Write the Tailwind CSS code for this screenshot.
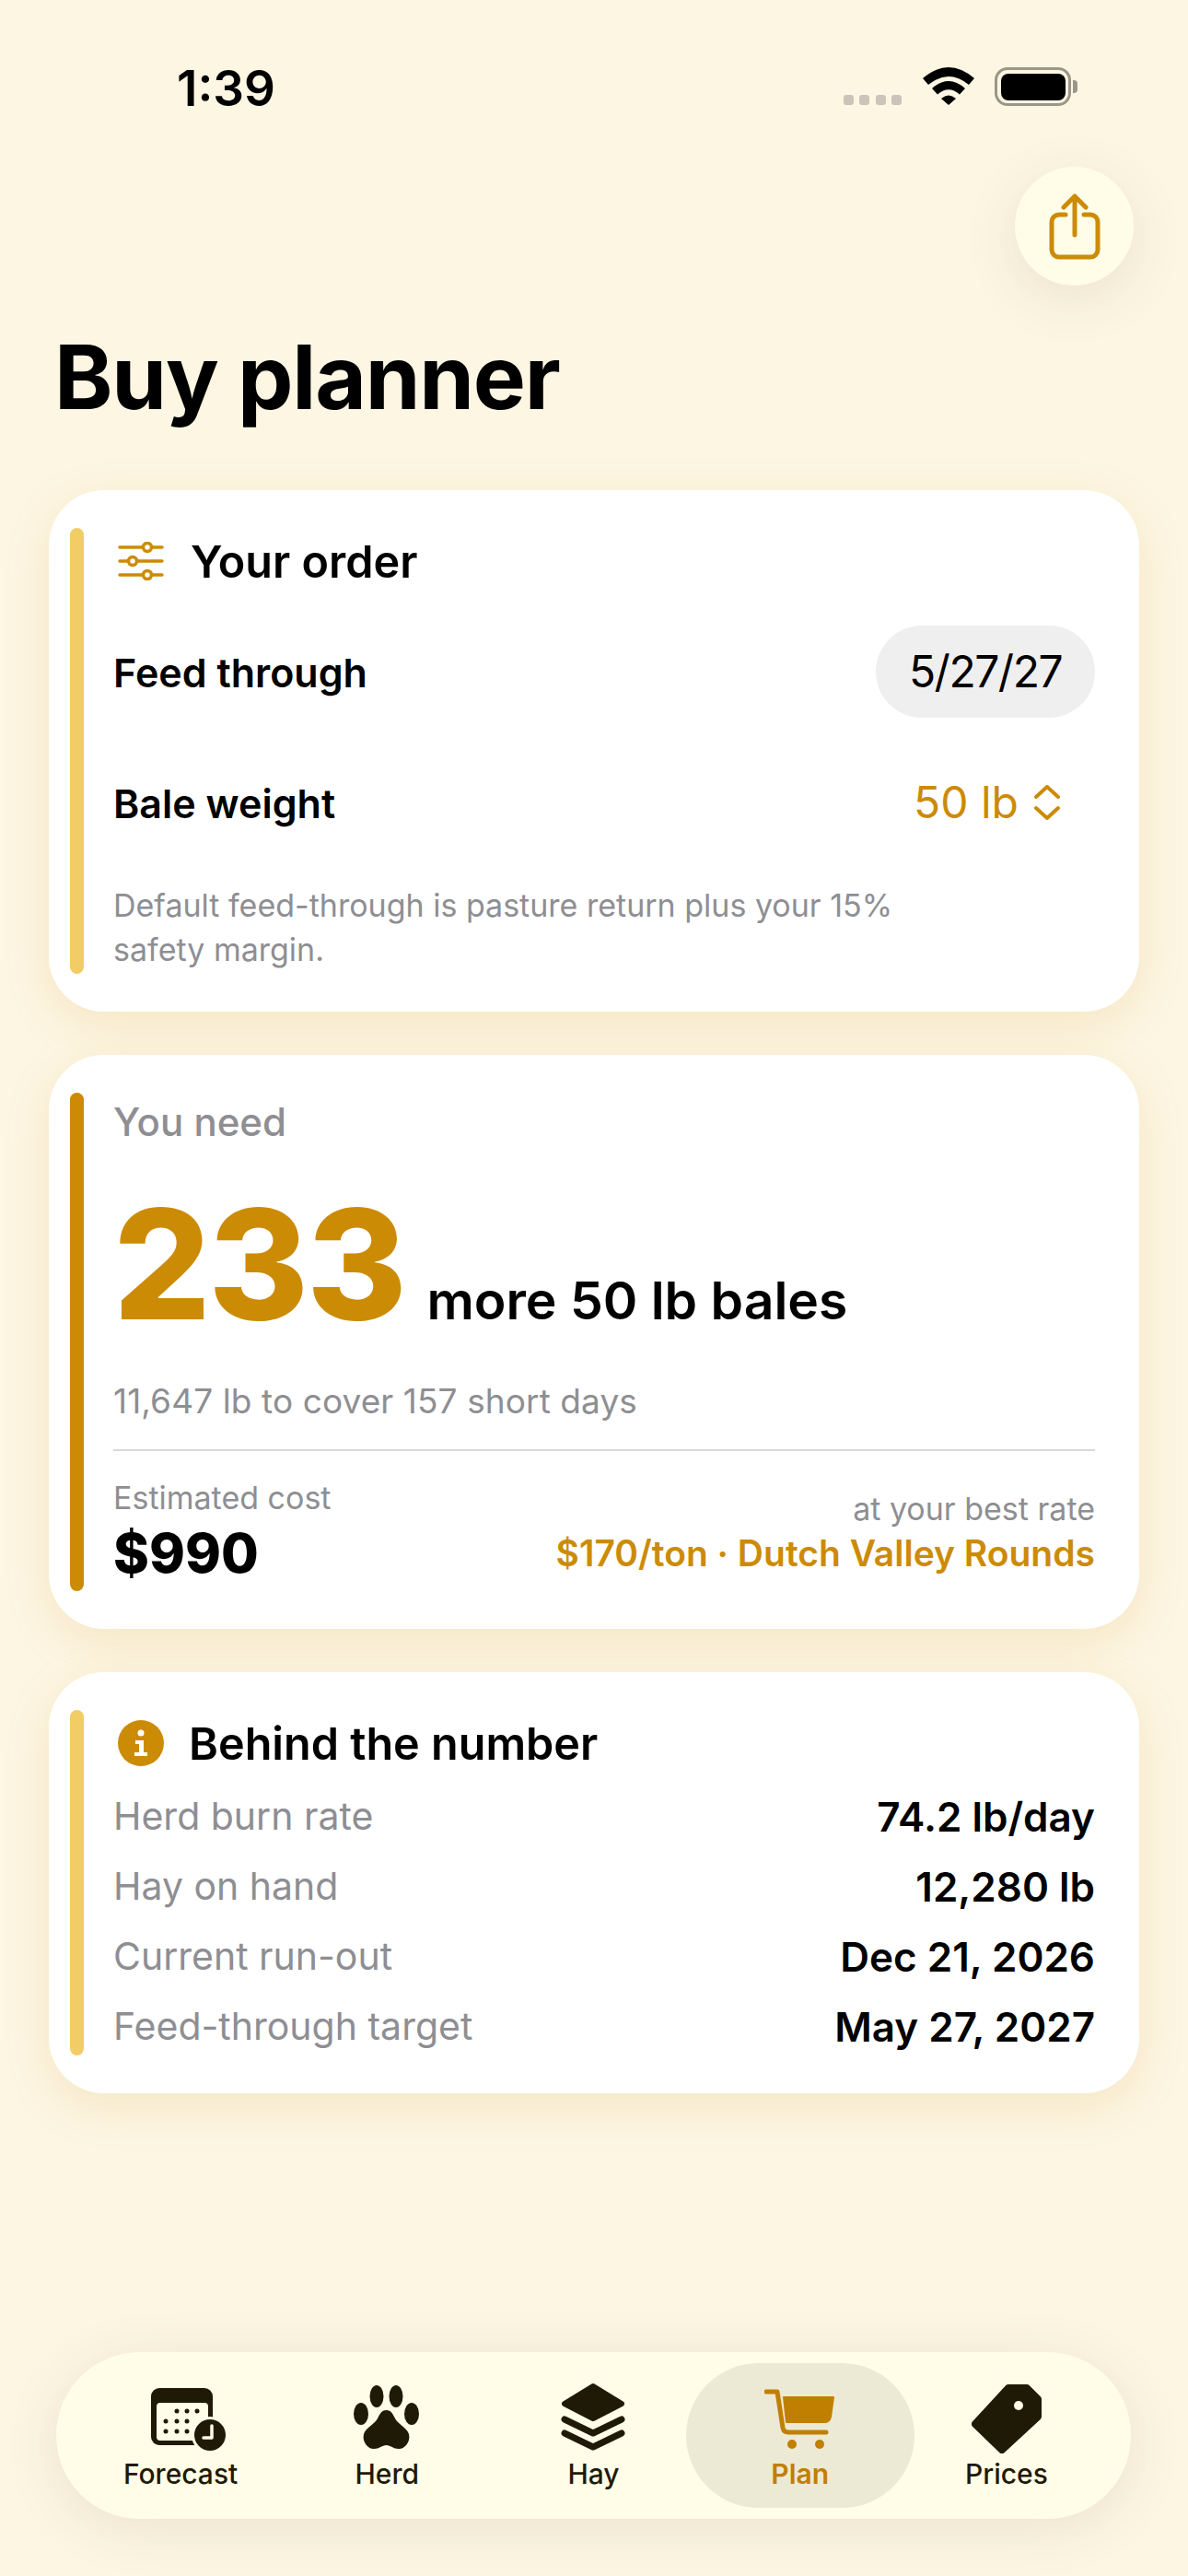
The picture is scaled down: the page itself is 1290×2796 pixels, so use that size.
<!DOCTYPE html>
<html lang="en">
<head>
  <meta charset="UTF-8" />
  <meta name="viewport" content="width=device-width, initial-scale=1.0"/>
  <title>Buy planner</title>
  <script src="https://cdn.jsdelivr.net/npm/@tailwindcss/browser@4"></script>
</head>
<body class="bg-[#fdf6e3]">
  <div class="w-[1290px] h-[2796px] flex flex-col bg-[#fdf6e3] text-black overflow-hidden [font-family:Inter,sans-serif]">

    <!-- status bar -->
    <div class="h-[181px] flex justify-between shrink-0">
      <div class="ml-[192px] mt-[70px] h-[52px] text-[53px] leading-[52px] font-semibold">1:39</div>
      <div class="mr-[120px] mt-[73px] h-[42px] flex items-start">
        <div class="flex gap-[6.5px] mt-[30px]">
          <div class="w-[11px] h-[11px] rounded-[3px] bg-[#cbc4b8]"></div>
          <div class="w-[11px] h-[11px] rounded-[3px] bg-[#cbc4b8]"></div>
          <div class="w-[11px] h-[11px] rounded-[3px] bg-[#cbc4b8]"></div>
          <div class="w-[11px] h-[11px] rounded-[3px] bg-[#cbc4b8]"></div>
        </div>
        <svg class="ml-[23px]" width="56" height="41" viewBox="0 0 56 41" fill="#000">
          <path d="M0 12 Q28 -12 56 12 L50 19 Q28 1 6 19Z"/>
          <path d="M10 23 Q28 7 46 23 L40 29.5 Q28 19 16 29.5Z"/>
          <path d="M20 34 Q28 27 36 34 L28 41Z"/>
        </svg>
        <div class="ml-[22px] w-[83px] h-[42px] rounded-[14px] border-[3.5px] border-[#9a9689] p-[3.5px]">
          <div class="w-full h-full rounded-[8px] bg-black"></div>
        </div>
        <div class="ml-[2px] mt-[14px] w-[5px] h-[14px] rounded-r-[4px] bg-[#9a9689]"></div>
      </div>
    </div>

    <!-- share button -->
    <div class="h-[129px] flex justify-end pr-[59px] shrink-0">
      <div class="w-[129px] h-[129px] rounded-full bg-[#fffde8] shadow-[0_14px_60px_rgba(80,60,20,0.10)] flex items-center justify-center">
        <svg width="60" height="74" viewBox="0 0 60 74" fill="none" stroke="#cc8b05" stroke-width="5" stroke-linecap="round" stroke-linejoin="round">
          <path d="M20 24 h-7 a8 8 0 0 0 -8 8 v30 a8 8 0 0 0 8 8 h34 a8 8 0 0 0 8 -8 v-30 a8 8 0 0 0 -8 -8 h-7"/>
          <path d="M30 46 V5 M18 16 L30 4 L42 16"/>
        </svg>
      </div>
    </div>

    <h1 class="mt-[51px] ml-[59px] text-[96px] leading-[96px] font-bold tracking-[-1.2px] shrink-0">Buy planner</h1>

    <!-- your order -->
    <div class="mt-[75px] mx-[53px] h-[566px] rounded-[60px] bg-white shadow-[0_14px_50px_rgba(205,150,40,0.16)] flex pl-[23px] py-[41px] pr-[48px] shrink-0">
      <div class="w-[15px] rounded-full bg-[#f2cd66] shrink-0"></div>
      <div class="ml-[32px] flex-1">
        <div class="h-[72px] flex items-center">
          <svg class="ml-[5px]" width="50" height="42" viewBox="0 0 50 42" fill="none" stroke="#cc8b05" stroke-width="3.5" stroke-linecap="round">
            <path d="M2 6 H27 M37 6 H48 M2 21 H11 M21 21 H48 M2 36 H27 M37 36 H48"/>
            <circle cx="32" cy="6" r="4.5"/>
            <circle cx="16" cy="21" r="4.5"/>
            <circle cx="32" cy="36" r="4.5"/>
          </svg>
          <div class="ml-[29px] pt-[2px] text-[48.5px] leading-[60px] font-semibold">Your order</div>
        </div>
        <div class="mt-[34px] h-[100px] flex items-center justify-between">
          <div class="pt-[2px] text-[43px] leading-[56px] font-semibold">Feed through</div>
          <div class="h-[100px] w-[238px] rounded-full bg-[#efefef] flex items-center justify-center text-[48px] leading-[60px] tracking-[-1.5px]">5/27/27</div>
        </div>
        <div class="mt-[42px] h-[100px] flex items-center justify-between">
          <div class="pt-[2px] text-[43px] leading-[56px] font-semibold">Bale weight</div>
          <div class="flex items-center text-[#cc8b05] pr-[38px]">
            <span class="text-[48px] leading-[60px]">50 lb</span>
            <svg class="ml-[17px]" width="28" height="38" viewBox="0 0 28 38" fill="none" stroke="#cc8b05" stroke-width="4" stroke-linecap="round" stroke-linejoin="round">
              <path d="M2 13 L14 2 L26 13 M2 25 L14 36 L26 25"/>
            </svg>
          </div>
        </div>
        <p class="mt-[38px] w-[900px] text-[34px] leading-[48px] text-[#8e8e93]">Default feed-through is pasture return plus your 15% safety margin.</p>
      </div>
    </div>

    <!-- you need -->
    <div class="mt-[47px] mx-[53px] h-[623px] rounded-[60px] bg-white shadow-[0_14px_50px_rgba(205,150,40,0.16)] flex pl-[23px] py-[41px] pr-[48px] shrink-0">
      <div class="w-[15px] rounded-full bg-[#cc8b05] shrink-0"></div>
      <div class="ml-[32px] flex-1">
        <div class="h-[63px] flex items-center text-[42px] leading-[52px] font-medium text-[#8e8e93]">You need</div>
        <div class="mt-[40px] h-[166px] flex items-baseline">
          <span class="text-[166px] leading-[166px] font-extrabold tracking-[-2.5px] text-[#cc8b05]">233</span>
          <span class="ml-[24px] text-[57px] leading-[60px] font-semibold">more 50 lb bales</span>
        </div>
        <div class="mt-[41px] h-[50px] flex items-center text-[37px] tracking-[0.1px] text-[#8e8e93]">11,647 lb to cover 157 short days</div>
        <div class="mt-[27px] h-[2px] bg-[#d9d9d9]"></div>
        <div class="mt-[27px] h-[126px] flex justify-between">
          <div>
            <div class="h-[46px] flex items-center text-[34px] text-[#8e8e93]">Estimated cost</div>
            <div class="mt-[8px] h-[60px] flex items-center text-[59px] font-extrabold">$990</div>
          </div>
          <div class="pt-[12px] text-right">
            <div class="h-[46px] flex items-center justify-end text-[34px] text-[#8e8e93]">at your best rate</div>
            <div class="mt-[1px] h-[50px] flex items-center justify-end text-[39px] font-semibold text-[#cc8b05]">$170/ton · Dutch Valley Rounds</div>
          </div>
        </div>
      </div>
    </div>

    <!-- behind the number -->
    <div class="mt-[47px] mx-[53px] h-[457px] rounded-[60px] bg-white shadow-[0_14px_50px_rgba(205,150,40,0.16)] flex pl-[23px] py-[41px] pr-[48px] shrink-0">
      <div class="w-[15px] rounded-full bg-[#f2cd66] shrink-0"></div>
      <div class="ml-[32px] flex-1">
        <div class="h-[72px] flex items-center">
          <svg class="ml-[5px]" width="50" height="50" viewBox="0 0 50 50">
            <circle cx="25" cy="25" r="25" fill="#cc8b05"/>
            <circle cx="25" cy="14" r="3.5" fill="#fff"/>
            <path d="M19 22 H28 V35 H32 V39 H18 V35 H23 V26 H19Z" fill="#fff"/>
          </svg>
          <div class="ml-[27px] pt-[2px] text-[48.5px] leading-[60px] font-semibold">Behind the number</div>
        </div>
        <div class="mt-[6px] flex flex-col">
          <div class="h-[76px] flex items-center justify-between"><span class="text-[41px] text-[#8e8e93]">Herd burn rate</span><span class="text-[44px] font-semibold">74.2 lb/day</span></div>
          <div class="h-[76px] flex items-center justify-between"><span class="text-[41px] text-[#8e8e93]">Hay on hand</span><span class="text-[44px] font-semibold">12,280 lb</span></div>
          <div class="h-[76px] flex items-center justify-between"><span class="text-[41px] text-[#8e8e93]">Current run-out</span><span class="text-[44px] font-semibold">Dec 21, 2026</span></div>
          <div class="h-[76px] flex items-center justify-between"><span class="text-[41px] text-[#8e8e93]">Feed-through target</span><span class="text-[44px] font-semibold">May 27, 2027</span></div>
        </div>
      </div>
    </div>

    <!-- tab bar -->
    <div class="mt-auto mb-[62px] ml-[61px] w-[1167px] h-[181px] rounded-full bg-[#fffde8] shadow-[0_10px_60px_rgba(80,60,20,0.10)] px-[23px] py-[12px] grid grid-cols-5 shrink-0 text-[#1f1a05] text-[30px] leading-[36px] font-medium">
      <div class="flex flex-col items-center">
        <div class="h-[102px]">
          <svg class="mt-[25px] ml-[17px]" width="84" height="72" viewBox="0 0 84 72">
            <rect x="1" y="2" width="67" height="62" rx="9" fill="#1f1a05"/>
            <rect x="7" y="18" width="56" height="41" rx="4" fill="#fffde8"/>
            <g fill="#1f1a05">
              <circle cx="29" cy="27" r="2.5"/><circle cx="40" cy="27" r="2.5"/><circle cx="51" cy="27" r="2.5"/>
              <circle cx="17" cy="38" r="2.5"/><circle cx="29" cy="38" r="2.5"/><circle cx="40" cy="38" r="2.5"/>
              <circle cx="17" cy="49" r="2.5"/><circle cx="29" cy="49" r="2.5"/><circle cx="40" cy="49" r="2.5"/>
            </g>
            <circle cx="65" cy="53" r="20" fill="#fffde8"/>
            <circle cx="65" cy="53" r="17" fill="#1f1a05"/>
            <path d="M67 43 V56 H58" fill="none" stroke="#fffde8" stroke-width="3.5" stroke-linecap="round" stroke-linejoin="round"/>
          </svg>
        </div>
        <span>Forecast</span>
      </div>
      <div class="flex flex-col items-center">
        <div class="h-[102px]">
          <svg class="mt-[24px]" width="72" height="70" viewBox="0 0 72 70" fill="#1f1a05">
            <ellipse cx="25" cy="12" rx="7.5" ry="12"/>
            <ellipse cx="46" cy="12" rx="7.5" ry="12"/>
            <ellipse cx="8" cy="31" rx="8" ry="12"/>
            <ellipse cx="63" cy="31" rx="8" ry="12"/>
            <path d="M35.5 27 C30 27 28 32 26 36 C23 42 13 46 11 53 C9 61 15 69 22 69 C28 69 31 65 35.5 65 C40 65 43 69 49 69 C56 69 62 61 60 53 C58 46 48 42 45 36 C43 32 41 27 35.5 27Z"/>
          </svg>
        </div>
        <span>Herd</span>
      </div>
      <div class="flex flex-col items-center">
        <div class="h-[102px]">
          <svg class="mt-[21px]" width="70" height="74" viewBox="0 0 70 74" fill="none" stroke="#1f1a05" stroke-linecap="round" stroke-linejoin="round">
            <path d="M35 4 L66 23 L35 39 L4 23Z" fill="#1f1a05" stroke-width="6"/>
            <path d="M4 40 L35 55 L66 40" stroke-width="7"/>
            <path d="M4 55 L35 70 L66 55" stroke-width="7"/>
          </svg>
        </div>
        <span>Hay</span>
      </div>
      <div class="-mx-[12px] rounded-[80px] bg-[#ecead5] flex flex-col items-center text-[#c17f00]">
        <div class="h-[102px]">
          <svg class="mt-[28px]" width="78" height="66" viewBox="0 0 78 66" fill="none" stroke="#c17f00" stroke-linecap="round" stroke-linejoin="round">
            <path d="M2 3 H14 L20 42 Q21 47 26 47 H67" stroke-width="5"/>
            <path d="M21 9 H75 L72 30 Q71 36 65 36 H24Z" fill="#c17f00" stroke-width="2"/>
            <circle cx="30" cy="60" r="5" fill="#c17f00" stroke="none"/>
            <circle cx="60" cy="60" r="5" fill="#c17f00" stroke="none"/>
          </svg>
        </div>
        <span class="font-semibold">Plan</span>
      </div>
      <div class="flex flex-col items-center">
        <div class="h-[102px]">
          <svg class="mt-[23px]" width="76" height="75" viewBox="0 0 76 75">
            <path fill="#1f1a05" stroke="#1f1a05" stroke-width="8" stroke-linejoin="round" d="M40 4 L60 4 L72 16 L72 35 L33 71 L4 43Z"/>
            <circle cx="51" cy="23" r="5" fill="#fffde8"/>
          </svg>
        </div>
        <span>Prices</span>
      </div>
    </div>
  </div>
</body>
</html>
